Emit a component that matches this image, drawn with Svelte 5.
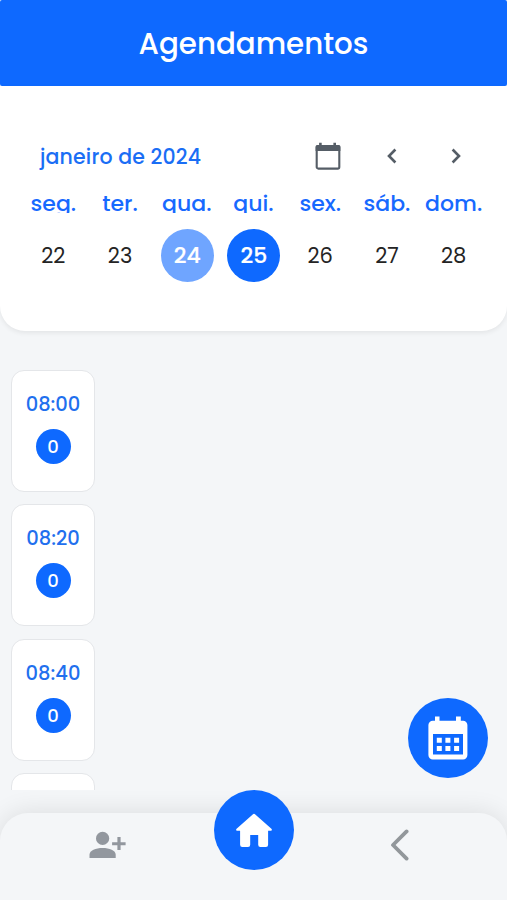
<script>
  const days = [
    { name: 'seg.', number: 22 },
    { name: 'ter.', number: 23 },
    { name: 'qua.', number: 24, state: 'today' },
    { name: 'qui.', number: 25, state: 'selected' },
    { name: 'sex.', number: 26 },
    { name: 'sáb.', number: 27 },
    { name: 'dom.', number: 28 }
  ];
  const slots = [
    { time: '08:00', count: 0 },
    { time: '08:20', count: 0 },
    { time: '08:40', count: 0 },
    { time: '09:00', count: 0 }
  ];
</script>

<div class="app">
  <header><h1>Agendamentos</h1></header>

  <section class="calendar">
    <div class="toolbar">
      <span class="month">janeiro de 2024</span>
      <button class="pick" aria-label="Calendário">
        <svg width="26" height="29" viewBox="0 0 26 29">
          <path d="M5.4 .7v4M19.7 .7v4" stroke="#555d66" stroke-width="2.6" />
          <rect x="1.7" y="4" width="22.6" height="22.6" rx="1.6" fill="none" stroke="#555d66" stroke-width="2.1" />
          <path d="M2.2 3h21.6a1.6 1.6 0 0 1 1.6 1.6V9H.6V4.6A1.6 1.6 0 0 1 2.2 3z" fill="#555d66" />
        </svg>
      </button>
      <button class="prev" aria-label="Semana anterior">
        <svg width="10" height="16" viewBox="0 0 10 16"><path d="M8.4 1.5 2 8l6.4 6.5" /></svg>
      </button>
      <button class="next" aria-label="Próxima semana">
        <svg width="10" height="16" viewBox="0 0 10 16"><path d="M1.6 1.5 8 8l-6.4 6.5" /></svg>
      </button>
    </div>
    <div class="week">
      {#each days as day}
        <div class="day">
          <span class="name">{day.name}</span>
          <span class="number {day.state ?? ''}">{day.number}</span>
        </div>
      {/each}
    </div>
  </section>

  <main>
    <div class="slots">
      {#each slots as slot}
        <article>
          <span class="time">{slot.time}</span>
          <span class="count">{slot.count}</span>
        </article>
      {/each}
    </div>
  </main>

  <button class="fab" aria-label="Agenda">
    <svg width="40" height="44" viewBox="0 0 40 44">
      <path fill="#fff" fill-rule="evenodd" d="M7 .5h4.5v4.2H28V.5h4.8v4.2H35a4.4 4.4 0 0 1 4.4 4.4v30a4.4 4.4 0 0 1-4.4 4.4H4.8A4.4 4.4 0 0 1 .4 39.1v-30a4.4 4.4 0 0 1 4.4-4.4H7zM5 18v20.4h30V18z" />
      <path fill="#fff" d="M8.8 21.7h5v5h-5zm8.6 0h5v5h-5zm8.7 0h5v5h-5zM8.8 30h5v5h-5zm8.6 0h5v5h-5zm8.7 0h5v5h-5z" />
    </svg>
  </button>

  <footer>
    <nav>
      <button class="add" aria-label="Adicionar cliente">
        <svg width="37" height="28" viewBox="0 0 37 28" fill="#92979e">
          <circle cx="13.6" cy="7.4" r="6.6" />
          <path d="M.5 26.9v-3.2c0-4.3 6.3-6.7 13.1-6.7s13.1 2.4 13.1 6.7v3.2z" />
          <path d="M28.4 5.9h3.2v5.3h5v3h-5v4.9h-3.2v-4.9h-5.3v-3h5.3z" />
        </svg>
      </button>
      <button class="home" aria-label="Início">
        <svg width="38" height="35" viewBox="0 0 38 35">
          <path fill="#fff" d="M17.7 1.4a2 2 0 0 1 2.6 0L36.4 15.8c.9.8.5 1.9-.7 1.9h-2.6v14a2.2 2.2 0 0 1-2.2 2.2h-5.5a2.2 2.2 0 0 1-2.2-2.2V22h-8v9.7a2.2 2.2 0 0 1-2.2 2.2H7.3a2.2 2.2 0 0 1-2.2-2.2v-14H2.3c-1.2 0-1.6-1.1-.7-1.9z" />
        </svg>
      </button>
      <button class="back" aria-label="Voltar">
        <svg width="20" height="32" viewBox="0 0 20 32"><path d="M16.6 2.4 3 16l13.6 13.6" /></svg>
      </button>
    </nav>
  </footer>
</div>

<style>
  :global(body) {
    margin: 0;
    background: #f4f6f8;
  }
  .app {
    position: relative;
    display: flex;
    flex-direction: column;
    height: 900px;
    overflow: hidden;
    background: #f4f6f8;
    color: #242424;
    font-family: Poppins, Inter, sans-serif;
  }
  button {
    display: flex;
    align-items: center;
    justify-content: center;
    padding: 0;
    border: 0;
    background: none;
  }
  header {
    flex: 0 0 86px;
    display: flex;
    align-items: center;
    justify-content: center;
    border-radius: 2px;
    background: #0e69ff;
  }
  h1 {
    margin: 2px 0 0;
    color: #fff;
    font-size: 29.3px;
    font-weight: 500;
    line-height: 40px;
  }
  .calendar {
    flex: 0 0 245px;
    box-sizing: border-box;
    padding: 50px 20px 0;
    border-radius: 0 0 25px 25px;
    background: #fff;
    box-shadow: 0 2px 5px rgba(0, 0, 0, 0.07);
  }
  .toolbar {
    display: flex;
    align-items: center;
    height: 40px;
    padding-left: 20px;
  }
  .month {
    flex: 0 0 275px;
    color: #1a6ef5;
    font-size: 20.5px;
    font-weight: 500;
    letter-spacing: 0.15px;
  }
  .pick {
    width: 26px;
  }
  .prev {
    width: 10px;
    margin-left: 46px;
  }
  .next {
    width: 10px;
    margin-left: 54px;
  }
  .prev path,
  .next path {
    fill: none;
    stroke: #555d66;
    stroke-width: 2.6;
  }
  .week {
    display: grid;
    grid-template-columns: repeat(7, 1fr);
    margin-top: 14px;
  }
  .day {
    display: flex;
    flex-direction: column;
    align-items: center;
  }
  .name {
    height: 22.5px;
    overflow: hidden;
    color: #1769ff;
    font-size: 22px;
    font-weight: 500;
    line-height: 28px;
    white-space: nowrap;
  }
  .number {
    display: flex;
    align-items: center;
    justify-content: center;
    width: 53px;
    height: 53px;
    margin-top: 16.5px;
    border-radius: 50%;
    font-size: 21px;
  }
  .today,
  .selected {
    margin-left: 1px;
    color: #fff;
    font-size: 22px;
    font-weight: 500;
    -webkit-text-stroke: 0.2px #fff;
  }
  .today {
    background: #6fa5ff;
  }
  .selected {
    background: #0e69ff;
  }
  main {
    flex: 0 0 459px;
    box-sizing: border-box;
    padding: 39px 11px 0;
    overflow: hidden;
  }
  .slots {
    display: flex;
    flex-direction: column;
    gap: 12.3px;
    width: 84px;
  }
  article {
    flex: 0 0 122px;
    box-sizing: border-box;
    display: flex;
    flex-direction: column;
    align-items: center;
    padding-top: 20px;
    border: 1px solid #e4e6e9;
    border-radius: 13px;
    background: #fff;
  }
  .time {
    color: #216fee;
    font-size: 19.5px;
    font-weight: 500;
    line-height: 28px;
  }
  .count {
    display: flex;
    align-items: center;
    justify-content: center;
    width: 35px;
    height: 35px;
    margin-top: 10px;
    border-radius: 50%;
    background: #0e69ff;
    color: #fff;
    font-size: 18px;
    font-weight: 500;
  }
  .fab {
    position: absolute;
    top: 698px;
    right: 19px;
    width: 80px;
    height: 80px;
    border-radius: 50%;
    background: #0e69ff;
  }
  footer {
    flex: 0 0 110px;
    box-sizing: border-box;
    padding-top: 23px;
    clip-path: inset(0);
  }
  nav {
    height: 87px;
    display: grid;
    grid-template-columns: 214px 80px 213px;
    border-radius: 28px 28px 0 0;
    background: #f4f6f8;
    box-shadow: 0 0 26px rgba(0, 0, 0, 0.11);
  }
  .add {
    width: 37px;
    height: 28px;
    margin: 18px 0 0 89px;
  }
  .home {
    width: 80px;
    height: 80px;
    margin-top: -23px;
    border-radius: 50%;
    background: #0e69ff;
  }
  .back {
    width: 20px;
    height: 32px;
    margin: 16px 0 0 96px;
  }
  .back path {
    fill: none;
    stroke: #92979b;
    stroke-width: 3.8;
    stroke-linecap: round;
    stroke-linejoin: round;
  }
</style>
